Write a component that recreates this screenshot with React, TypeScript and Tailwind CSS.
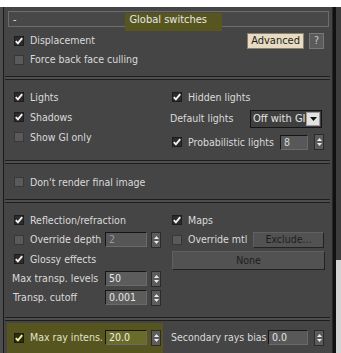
import React from 'react';

const Check = ({ on, olive }: { on?: boolean; olive?: boolean }) => (
  <span
    className={`w-[10px] h-[10px] shrink-0 flex items-center justify-center border ${
      on
        ? olive
          ? 'bg-[#2e2d10] border-[#1c1c0a]'
          : 'bg-[#2b2b2b] border-[#1d1d1d]'
        : 'bg-[#5a5a5a] border-[#383838]'
    }`}
  >
    {on && (
      <svg width="8" height="8" viewBox="0 0 8 8">
        <path d="M0.8 4.2l2.1 2.2L7.2 1.2" fill="none" stroke={olive ? '#f4f2b0' : '#f2f2f2'} strokeWidth="1.9" />
      </svg>
    )}
  </span>
);

const Spin = () => (
  <span className="w-[10px] h-[16px] shrink-0 bg-[#5c5c5c] border border-[#2a2a2a] flex flex-col items-center justify-center gap-[2px]">
    <svg width="5" height="3" viewBox="0 0 5 3">
      <path d="M2.5 0L5 3H0z" fill="#ececec" />
    </svg>
    <svg width="5" height="3" viewBox="0 0 5 3">
      <path d="M0 0h5L2.5 3z" fill="#ececec" />
    </svg>
  </span>
);

const Field = ({ value, className }: { value: string; className: string }) => (
  <span
    className={`h-[15px] shrink-0 border border-[#161616] border-b-[#6a6a6a] border-r-[#6a6a6a] pl-[3px] flex items-center ${className}`}
  >
    {value}
  </span>
);

const Row = ({ children, h }: { children: React.ReactNode; h: string }) => (
  <div className={`flex items-center ${h}`}>{children}</div>
);

const Sep = () => (
  <div className="h-[4px] border-y border-[#1e1e1e] bg-[#4e4e4e] ml-[1px] mr-[2px]" />
);

export default function App() {
  return (
    <div
      className="w-[341px] h-[353px] bg-white overflow-hidden text-[#dadada] text-[10.5px] leading-none"
      style={{ fontFamily: '"DejaVu Sans Condensed", "Liberation Sans", sans-serif' }}
    >
      <div className="mt-[7px] h-[346px] flex">
        <div className="w-[3px] bg-[#4d4d4d]" />
        <div className="w-[330px] bg-[#454545] border-l border-[#1a1a1a] border-r border-r-[#262626] flex flex-col">
          {/* header */}
          <div className="relative mt-[4px] ml-[4px] mr-[3px] h-[16px] border border-[#6c6c6c] bg-[#484848] flex items-center">
            <span className="absolute left-[116px] top-[1px] w-[97px] h-[18px] bg-[#58561f]" />
            <span className="relative pl-[4px] text-[#e8e8e8]">-</span>
            <span className="relative ml-[113px] text-[#e6e6e6] text-[11px]">Global switches</span>
          </div>

          {/* section 1 */}
          <div className="pl-[10px] pr-[8px] mt-[4px]">
            <Row h="h-[19px]">
              <Check on />
              <span className="ml-[6px]">Displacement</span>
              <span className="ml-auto h-[16px] px-[3px] bg-[#e7dcc1] border border-[#8a8270] text-[#1e1e1e] text-[11px] flex items-center">
                Advanced
              </span>
              <span className="ml-[5px] w-[15px] h-[16px] bg-[#5b5b5b] border border-[#777] text-[#c8c8c8] flex items-center justify-center">
                ?
              </span>
            </Row>
            <Row h="h-[19px]">
              <Check />
              <span className="ml-[6px]">Force back face culling</span>
            </Row>
          </div>
          <div className="mt-[7px]">
            <Sep />
          </div>

          {/* section 2 */}
          <div className="pl-[10px] pr-[8px] pt-[7px] h-[80px] flex">
            <div className="w-[158px] flex flex-col">
              <Row h="h-[20px]">
                <Check on />
                <span className="ml-[6px]">Lights</span>
              </Row>
              <Row h="h-[20px]">
                <Check on />
                <span className="ml-[6px]">Shadows</span>
              </Row>
              <Row h="h-[20px]">
                <Check />
                <span className="ml-[6px]">Show GI only</span>
              </Row>
            </div>
            <div className="flex-1 flex flex-col">
              <Row h="h-[20px]">
                <Check on />
                <span className="ml-[6px]">Hidden lights</span>
              </Row>
              <Row h="h-[23px]">
                <span className="-ml-[2px]">Default lights</span>
                <span className="ml-auto mr-[2px] w-[72px] h-[18px] border border-[#151515] bg-[#3f3f3f] flex items-center">
                  <span className="pl-[2px] flex-1 text-[#e4e4e4] text-[11px] whitespace-nowrap overflow-hidden">Off with GI</span>
                  <span className="w-[14px] h-[14px] mr-[1px] bg-[#e2e2e2] border border-[#9a9a9a] flex items-center justify-center">
                    <svg width="7" height="4" viewBox="0 0 7 4">
                      <path d="M0 0h7L3.5 4z" fill="#111" />
                    </svg>
                  </span>
                </span>
              </Row>
              <div className="mt-[2px]">
                <Row h="h-[20px]">
                  <Check on />
                  <span className="ml-[6px] whitespace-nowrap">Probabilistic lights</span>
                  <span className="ml-auto flex items-center gap-[6px]">
                    <Field value="8" className="w-[28px] bg-[#585858]" />
                    <Spin />
                  </span>
                </Row>
              </div>
            </div>
          </div>
          <Sep />

          {/* section 3 */}
          <div className="pl-[10px] h-[35px] pt-[8px]">
            <Row h="h-[20px]">
              <Check />
              <span className="ml-[6px]">Don't render final image</span>
            </Row>
          </div>
          <Sep />

          {/* section 4 */}
          <div className="pl-[10px] pr-[8px] pt-[7px] h-[114px] flex">
            <div className="w-[158px] flex flex-col">
              <Row h="h-[20px]">
                <Check on />
                <span className="ml-[6px]">Reflection/refraction</span>
              </Row>
              <Row h="h-[19px]">
                <span className="w-[91px] flex items-center">
                  <Check />
                  <span className="ml-[6px] whitespace-nowrap">Override depth</span>
                </span>
                <Field value="2" className="w-[42px] bg-[#565656] text-[#9a9a9a]" />
                <span className="ml-[4px]">
                  <Spin />
                </span>
              </Row>
              <Row h="h-[20px]">
                <Check on />
                <span className="ml-[6px]">Glossy effects</span>
              </Row>
              <Row h="h-[19px]">
                <span className="w-[91px] -ml-[2px] whitespace-nowrap">Max transp. levels</span>
                <Field value="50" className="w-[42px] ml-[2px] bg-[#5c5c5c] text-[#e6e6e6]" />
                <span className="ml-[4px]">
                  <Spin />
                </span>
              </Row>
              <Row h="h-[19px]">
                <span className="w-[91px] -ml-[1px] whitespace-nowrap">Transp. cutoff</span>
                <Field value="0.001" className="w-[42px] ml-[1px] bg-[#5c5c5c] text-[#e6e6e6]" />
                <span className="ml-[4px]">
                  <Spin />
                </span>
              </Row>
            </div>
            <div className="flex-1 flex flex-col">
              <Row h="h-[20px]">
                <Check on />
                <span className="ml-[6px]">Maps</span>
              </Row>
              <Row h="h-[19px]">
                <Check />
                <span className="ml-[6px]">Override mtl</span>
                <span className="ml-auto w-[71px] h-[16px] bg-[#525252] border border-[#222] border-t-[#606060] border-l-[#606060] text-[#1e1e1e] flex items-center justify-center">
                  Exclude...
                </span>
              </Row>
              <span className="mt-[2px] h-[19px] -mr-[1px] bg-[#525252] border border-[#222] border-t-[#606060] border-l-[#606060] text-[#1e1e1e] flex items-center justify-center">
                None
              </span>
            </div>
          </div>
          <Sep />

          {/* section 5 */}
          <div className="flex flex-1 pt-[2px] pr-[8px]">
            <div className="ml-[3px] w-[156px] bg-[#56551f] flex items-start pl-[7px] pt-[6px]">
              <Row h="h-[17px]">
                <Check on olive />
                <span className="ml-[6px] w-[75px] whitespace-nowrap text-[#e2e2c8]">Max ray intens.</span>
                <Field value="20.0" className="w-[42px] bg-[#6a6a2a] text-[#f0f0e0] border-[#1a1a08]" />
                <span className="ml-[4px]">
                  <Spin />
                </span>
              </Row>
            </div>
            <div className="flex-1 pt-[6px] pl-[8px]">
              <Row h="h-[17px]">
                <span className="whitespace-nowrap">Secondary rays bias</span>
                <span className="ml-auto flex items-center gap-[6px]">
                  <Field value="0.0" className="w-[40px] bg-[#585858] text-[#e6e6e6]" />
                  <Spin />
                </span>
              </Row>
            </div>
          </div>
        </div>
        <div className="w-[3px] bg-[#111]" />
        <div className="flex-1 flex flex-col">
          <div className="h-[253px] bg-[#3d3d3d]" />
          <div className="flex-1 bg-[#d4d4d4]" />
        </div>
      </div>
    </div>
  );
}
